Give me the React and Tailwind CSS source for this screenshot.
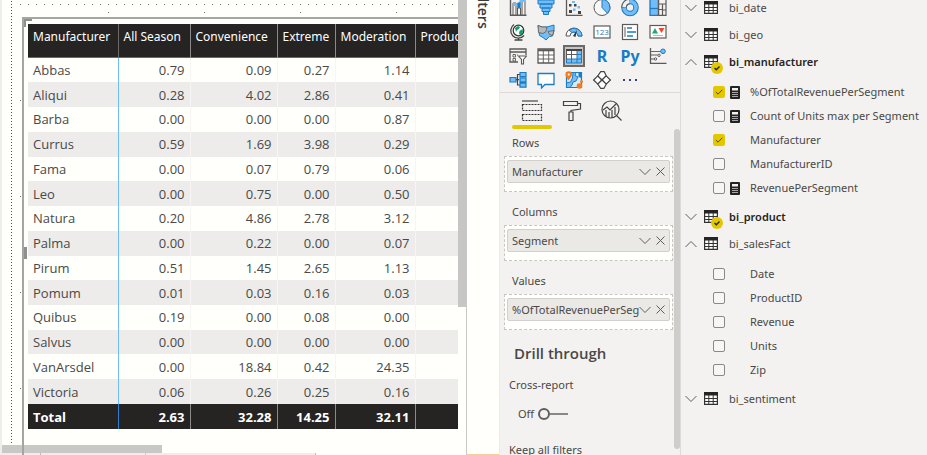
import React from "react";

const COLUMNS = ["All Season", "Convenience", "Extreme", "Moderation", "Productivity"];

const DATA = [
  ["Abbas", "0.79", "0.09", "0.27", "1.14"],
  ["Aliqui", "0.28", "4.02", "2.86", "0.41"],
  ["Barba", "0.00", "0.00", "0.00", "0.87"],
  ["Currus", "0.59", "1.69", "3.98", "0.29"],
  ["Fama", "0.00", "0.07", "0.79", "0.06"],
  ["Leo", "0.00", "0.75", "0.00", "0.50"],
  ["Natura", "0.20", "4.86", "2.78", "3.12"],
  ["Palma", "0.00", "0.22", "0.00", "0.07"],
  ["Pirum", "0.51", "1.45", "2.65", "1.13"],
  ["Pomum", "0.01", "0.03", "0.16", "0.03"],
  ["Quibus", "0.19", "0.00", "0.08", "0.00"],
  ["Salvus", "0.00", "0.00", "0.00", "0.00"],
  ["VanArsdel", "0.00", "18.84", "0.42", "24.35"],
  ["Victoria", "0.06", "0.26", "0.25", "0.16"],
];

const TOTAL = ["2.63", "32.28", "14.25", "32.11"];

const G = "#5c5a58";
const B = "#1a7cc4";
const L = "#74bcf5";

/* ---------- visual gallery icons, each on an 18 x 18 grid ---------- */

const VISUALS = [
  {
    name: "Ribbon chart",
    art: (
      <>
        <path d="M1.5 0V16.3H17.5" fill="none" stroke={G} strokeWidth="1.4" />
        <path d="M4 4h3v12H4zM8.5 9h3v7h-3zM13 2h3v14h-3z" fill="#f3f2f1" stroke={G} />
        <path d="M4 4h5c2 0 .5-4 3.500-4h4.500v3h-4c-1.500 0-.5 6-2.500 6H8V7H4z" fill={L} />
        <path d="M8.500 9V3.500h3V9z" fill={B} />
      </>
    ),
  },
  {
    name: "Funnel",
    art: (
      <g fill={L} stroke={B}>
        <path d="M1 1h16v4H1zM3 5h12v4H3zM5 9h8v3.500H5zM6.500 12.500h5v3h-5z" />
      </g>
    ),
  },
  {
    name: "Scatter chart",
    art: (
      <>
        <path d="M1.5 0V16.3H17.5" fill="none" stroke={G} strokeWidth="1.3" />
        <path d="M4 11h3v3H4zM9 5h2.500v2.500H9zM13 12h3v3h-3zM4 5h2.500v2.500H4z" fill="#444" />
        <path d="M8 9.500h2.500V12H8zM12.500 7h2.500v2.500h-2.500zM7 2h3v2H7z" fill={L} />
      </>
    ),
  },
  {
    name: "Pie chart",
    art: (
      <>
        <circle cx="9" cy="8.500" r="8" fill="#f8f8f6" stroke={G} />
        <path d="M9 .5a8 8 0 0 1 5.500 13.800L9 8.500z" fill={L} stroke={B} />
      </>
    ),
  },
  {
    name: "Donut chart",
    art: (
      <>
        <circle cx="9" cy="8.500" r="6" fill="none" stroke={B} strokeWidth="5.600" />
        <circle cx="9" cy="8.500" r="6" fill="none" stroke={L} strokeWidth="3.600" />
        <path d="M3 8.500a6 6 0 0 1 6-6" fill="none" stroke={G} strokeWidth="5.600" />
        <path d="M3 8a6 6 0 0 1 5.500-5.500" fill="none" stroke="#f3f2f1" strokeWidth="3.600" />
      </>
    ),
  },
  {
    name: "Treemap",
    art: (
      <>
        <path d="M1 0h8.500v16.300H1z" fill={L} stroke={B} strokeWidth="1.300" />
        <path d="M1 9.500h8.500" stroke={B} strokeWidth="1.300" />
        <path d="M9.500 0h7.500v16.300H9.500zM9.500 5h7.500M9.500 10.500h4V16M13.500 5v6H17" fill="none" stroke={G} strokeWidth="1.200" />
      </>
    ),
  },
  {
    name: "Map",
    art: (
      <>
        <circle cx="9.500" cy="7.500" r="5.300" fill="#fff" stroke="#333" strokeWidth="1.200" />
        <path d="M6 5l3-2 2 1-1 2-2 1-1 2zM10.500 8l3-2 .5 3-2 3-2-1z" fill="#0aa06e" />
        <path d="M5 1.500a7.500 7.500 0 1 0 10 11M9.500 14.500V17M5.500 17h8" fill="none" stroke="#444" strokeWidth="1.300" />
      </>
    ),
  },
  {
    name: "Filled map",
    art: (
      <>
        <path d="M1 2.500l4 1.500h5l7-2v6l-1.500 5-3 .5-3.500 3.500-3-2.500-3.500-2z" fill={L} stroke={B} />
        <path d="M1 2.500l4 1.500h5l-1 4.500-3 2-4.500-1zM11 8.500l6-1-1.500 5-3-1z" fill="#b9b8b6" stroke={G} strokeWidth=".800" />
      </>
    ),
  },
  {
    name: "Gauge",
    art: (
      <>
        <path d="M1 13a8 8 0 0 1 16 0h-4a4 4 0 0 0-8 0z" fill="#fff" stroke={G} />
        <path d="M4 7.200A8 8 0 0 1 17 13h-4A4 4 0 0 0 7 9.500z" fill={L} stroke={B} />
        <path d="M8 13l4-6-1.500 7z" fill="#333" />
      </>
    ),
  },
  {
    name: "Card",
    art: (
      <>
        <rect x="1" y="3" width="16" height="12" fill="#fff" stroke={G} strokeWidth="1.200" />
        <text x="9" y="12" textAnchor="middle" fontSize="8" fill={B} fontFamily="Open Sans, sans-serif">123</text>
      </>
    ),
  },
  {
    name: "Multi-row card",
    art: (
      <>
        <rect x="1.500" y="1.500" width="15" height="15" fill="#fff" stroke={G} strokeWidth="1.200" />
        <path d="M4 4v10" stroke={G} />
        <path d="M6 5h5M6 9h9M6 13h6" stroke={B} strokeWidth="1.600" />
      </>
    ),
  },
  {
    name: "KPI",
    art: (
      <>
        <rect x="1" y="2.500" width="16" height="12.500" fill="#fff" stroke={G} strokeWidth="1.200" />
        <path d="M3 10.500L6 5l3 5.500z" fill="#1aab77" />
        <path d="M9.500 5h6L12.500 10z" fill="#f0452f" />
        <path d="M4 12.500h10" stroke="#bbb" />
      </>
    ),
  },
  {
    name: "Slicer",
    art: (
      <>
        <path d="M9 15H1V2h16v6M1 5h16" fill="none" stroke={G} strokeWidth="1.300" />
        <path d="M4 7.500h2.500V10H4zM4 11.500h2.500V14H4zM9 8h-1" fill="none" stroke={G} strokeWidth=".900" />
        <path d="M9.500 9h8l-3 3.500v4.500h-2v-4.500z" fill="#fff" stroke={G} strokeWidth="1.100" />
      </>
    ),
  },
  {
    name: "Table",
    art: (
      <>
        <path d="M1 2h16v14H1z" fill="#fff" stroke={G} strokeWidth="1.300" />
        <path d="M1 3.300h16" stroke={G} strokeWidth="2" />
        <path d="M1 8h16M1 12h16M6.300 3v13M11.700 3v13" stroke={G} strokeWidth=".900" />
      </>
    ),
  },
  {
    name: "Matrix",
    selected: true,
    art: (
      <>
        <path d="M1.500 3h15v13h-15z" fill="#fff" />
        <path d="M12 3h4.500v13h-15v-4H12z" fill={L} stroke={B} />
        <path d="M12 7.500h4.500M6.500 12v4M12 12v4M12 12h4.500" stroke={B} />
        <path d="M1.500 12V3h10.500M1.500 7.500H12M6.500 3v9" fill="none" stroke={G} />
        <path d="M1 3h16" stroke="#444" strokeWidth="2" />
      </>
    ),
  },
  { name: "R script visual", text: "R" },
  { name: "Python visual", text: "Py" },
  {
    name: "Key influencers",
    art: (
      <>
        <path d="M1.500 1v15.300h16" fill="none" stroke={G} strokeWidth="1.300" />
        <path d="M1.500 4.500H12" stroke={B} />
        <path d="M1.500 8h7M1.500 12h4" stroke={G} />
        <circle cx="14" cy="4.300" r="2.300" fill={L} stroke={B} />
        <circle cx="10" cy="8.300" r="1.200" fill="none" stroke={G} />
        <circle cx="6.500" cy="12" r="1.200" fill="none" stroke={G} />
      </>
    ),
  },
  {
    name: "Decomposition tree",
    art: (
      <>
        <path d="M6 8.700h4M11 3.500H8.500v10.500H11" fill="none" stroke="#444" strokeWidth="1.200" />
        <path d="M1 6.500h6v4.500H1zM11 1.500h6v4h-6zM11 6.800h6v4h-6zM11 12.200h6v4h-6z" fill={L} stroke={B} strokeWidth="1.200" />
      </>
    ),
  },
  {
    name: "Q&A",
    art: <path d="M1 2.500h16v11H8L4.500 17v-3.500H1z" fill="#fff" stroke={B} strokeWidth="1.300" />,
  },
  {
    name: "ArcGIS Maps",
    art: (
      <>
        <path d="M1.500 1.500h15v15h-15z" fill="#d5eafa" stroke={B} strokeWidth="1.200" />
        <path d="M8 1.500h3l-1 3 3 1.500-2 4-3 1-1 3-2 2.500H1.500V12l4-1 2-4z" fill={L} stroke={B} />
        <path d="M13.500 2h3v5l-3-1z" fill={B} />
        <path d="M3.500 9.500C1 6 .5 5 .5 3.500a3 3 0 0 1 6.500 0c0 1.500-1 2.500-3.500 6z" fill="#f57b1c" />
        <circle cx="3.700" cy="3.500" r="1" fill="#fff" />
        <circle cx="14.500" cy="15" r="2.800" fill="#f57b1c" />
        <circle cx="16.500" cy="10.500" r="1.500" fill="#f57b1c" />
      </>
    ),
  },
  {
    name: "Power Apps",
    art: (
      <g fill="#fff" stroke="#444" strokeWidth="1.200" strokeLinejoin="round">
        <path d="M5.500.7h6L17.400 9l-5.900 8.300h-6L.6 9z" stroke="none" />
        <path d="M.6 9l4.200-4.200L9 9l-4.200 4.200z" />
        <path d="M4.800 4.800L7.700.7h3.600L13.200 4.800 9 9z" />
        <path d="M9 9l4.200-4.200L17.400 9l-4.200 4.200z" />
        <path d="M4.800 13.200L9 9l4.200 4.200-2.200 4.100H7.700z" />
      </g>
    ),
  },
];

function VisualButton({ visual }) {
  return (
    <button
      type="button"
      aria-label={visual.name}
      className={
        "flex h-6 w-7 items-center justify-center " +
        (visual.text ? "text-base font-bold leading-none text-[#1a7cc4]" : "")
      }
    >
      {visual.text ? (
        visual.text
      ) : (
        <span
          className={
            visual.selected
              ? "flex size-[22px] shrink-0 items-center justify-center border-2 border-[#6b6a68] bg-[#c8c6c4]"
              : "flex"
          }
        >
          <svg width="18" height="18" viewBox="0 0 18 18" className="shrink-0">
            {visual.art}
          </svg>
        </span>
      )}
    </button>
  );
}

function Chevron({ up }) {
  return (
    <svg width="12" height="8" viewBox="0 0 12 8" className="shrink-0">
      <path d={up ? "M.5 7L6 1.500 11.500 7" : "M.5 1L6 6.500 11.500 1"} fill="none" stroke="#605e5c" />
    </svg>
  );
}

function TableIcon({ badge }) {
  return (
    <span className="relative flex shrink-0">
      <svg width="14" height="13" viewBox="0 0 14 13">
        <path d="M.6.6h12.800v11.800H.6z" fill="#fff" stroke="#333" strokeWidth="1.200" />
        <path d="M0 0h14v3.500H0z" fill="#252423" />
        <path d="M0 6.500h14M0 9.500h14M4.800 3v10M9.200 3v10" stroke="#333" />
      </svg>
      {badge && (
        <svg width="12" height="12" viewBox="0 0 12 12" className="absolute left-[7px] top-[7px]">
          <circle cx="6" cy="6" r="6" fill="#e3c800" />
          <path d="M3.500 6l1.800 1.700L8.500 4.500" fill="none" stroke="#252423" strokeWidth="1.400" />
        </svg>
      )}
    </span>
  );
}

function TableNode({ name, open, used, fields }) {
  return (
    <li>
      <button type="button" aria-expanded={!!open} className="flex h-[27px] items-center pl-1">
        <Chevron up={open} />
        <span className="ml-[7px] flex">
          <TableIcon badge={used} />
        </span>
        <span className={used ? "ml-[11px] font-semibold text-[#252423]" : "ml-[11px]"}>{name}</span>
      </button>
      {fields && (
        <ul className="pb-[3px] pl-8 pt-[5px]">
          {fields.map((f) => (
            <FieldNode key={f.name} {...f} />
          ))}
        </ul>
      )}
    </li>
  );
}

function FieldNode({ name, checked, measure }) {
  return (
    <li>
      <label className="flex h-6 items-center whitespace-nowrap">
        <span className="relative flex size-3 shrink-0">
          <input
            type="checkbox"
            defaultChecked={checked}
            className="peer size-3 appearance-none rounded-xs border border-[#8a8886] bg-[#f7f6f4] checked:border-[#e3c800] checked:bg-[#e3c800]"
          />
          <svg
            viewBox="0 0 12 12"
            className="pointer-events-none absolute inset-0 hidden size-3 peer-checked:block"
          >
            <path d="M2.800 6l2.200 2.200 4.300-4.400" fill="none" stroke="#4f4800" />
          </svg>
        </span>
        <span className="ml-[5px] flex w-5 shrink-0">
          {measure && (
            <svg width="10" height="13" viewBox="0 0 10 13">
              <rect width="10" height="13" rx="1" fill="#252423" />
              <path d="M2 2h6v2.500H2z" fill="#f3f2f1" />
              <path d="M2 6.500h6M2 8.500h6M2 10.500h6" stroke="#a9a7a5" />
            </svg>
          )}
        </span>
        {name}
      </label>
    </li>
  );
}

function Well({ label, field }) {
  return (
    <section className="mb-[7px]">
      <h3 className="flex h-[26px] items-center pl-2">{label}</h3>
      <div className="h-9 border border-dashed border-[#c8c6c4] bg-[#fffffc] px-0.5 pt-[3px]">
        <div className="flex h-[23px] items-center rounded-xs border border-[#d2d0ce] bg-[#eae9e6] pl-1 pr-1">
          <span className="min-w-0 flex-1 overflow-hidden whitespace-nowrap">{field}</span>
          <button type="button" aria-label={"Options for " + field} className="flex">
            <Chevron />
          </button>
          <button type="button" aria-label={"Remove " + field} className="ml-[5px] flex">
            <svg width="9" height="9" viewBox="0 0 9 9">
              <path d="M.5.5l8 8M8.500.5l-8 8" stroke="#605e5c" />
            </svg>
          </button>
        </div>
      </div>
    </section>
  );
}

function Matrix() {
  return (
    <table className="h-[405px] w-[480px] table-fixed border-collapse text-[13px] leading-5 text-[#4a4947]">
      <colgroup>
        <col className="w-[90px]" />
        <col className="w-[72px]" />
        <col className="w-[87px]" />
        <col className="w-[58px]" />
        <col className="w-[80px]" />
        <col />
      </colgroup>
      <thead>
        <tr className="h-[33px] border-b border-[#1f7ad0] bg-[#252423] font-['Noto_Sans','Open_Sans',sans-serif] text-xs leading-5 text-white">
          <th scope="col" className="border-r border-[#6a6a68] px-[5px] pb-1.5 text-left font-normal">
            Manufacturer
          </th>
          {COLUMNS.map((c) => (
            <th key={c} scope="col" className="whitespace-nowrap border-r border-[#8a8a88] px-[5px] pb-1.5 text-left font-normal">
              {c}
            </th>
          ))}
        </tr>
      </thead>
      <tbody>
        {DATA.map(([name, ...values]) => (
          <tr key={name} className="even:bg-[#edecea]">
            <th scope="row" className="border-r border-[#6fbcfb] px-[5px] text-left font-normal">
              {name}
            </th>
            {values.map((v, i) => (
              <td key={i} className="border-r border-[#f6f5f3] px-[5px] text-right">
                {v}
              </td>
            ))}
            <td />
          </tr>
        ))}
      </tbody>
      <tfoot>
        <tr className="h-[25px] bg-[#252423] font-bold text-white">
          <th scope="row" className="border-r border-[#2f80cc] px-[5px] text-left">
            Total
          </th>
          {TOTAL.map((v) => (
            <td key={v} className="border-r border-[#8a8a88] px-[5px] text-right">
              {v}
            </td>
          ))}
          <td />
        </tr>
      </tfoot>
    </table>
  );
}

function ReportCanvas() {
  return (
    <main className="flex min-w-0 flex-1 flex-col border-r border-[#c8c8c6] bg-[#fffffc]">
      <div className="flex min-h-0 flex-1">
        <div className="w-0.5 bg-[#efeeec]" />
        <div className="relative flex min-w-0 flex-1 flex-col overflow-hidden">
          <svg className="absolute inset-0 h-full w-full" aria-hidden="true">
            <path d="M9.500 1V445" stroke="#555" strokeDasharray="1 2" />
            <path d="M18 4.500H2000" stroke="#777" strokeDasharray="1 7" />
            <path d="M106 12.500H2000" stroke="#777" strokeDasharray="1 95" />
            <path d="M18.500 100V445" stroke="#777" strokeDasharray="1 95" />
          </svg>
          <div className="relative ml-5 mt-[17px] flex-1 overflow-hidden border-l-2 border-t-2 border-[#a5a5a3] pl-1 pt-[5px]">
            <span className="absolute left-0 top-0 size-2 border-l-2 border-t-2 border-[#8f8f8d]" />
            <span className="absolute left-0 top-[228px] h-3 w-[3px] bg-[#8f8f8d]" />
            <Matrix />
          </div>
        </div>
        <div className="w-2 shrink-0">
          <div className="h-[307px] bg-[#c6c6c4]" />
        </div>
      </div>
      <div className="-mt-[10px] ml-0.5 h-2 w-40 shrink-0 bg-[#c8c8c6]" />
      <div className="flex h-0.5 shrink-0 bg-[#fffffc]">
        <div className="w-[41px] border-r border-[#bbb] bg-[#efeeec]" />
        <div className="w-[105px] border-r border-[#ccc] bg-[#efeeec]" />
        <div className="w-[170px] border-r border-[#bbb] bg-[#efeeec]" />
      </div>
    </main>
  );
}

function FiltersRail() {
  return (
    <aside className="flex w-8 shrink-0 flex-col justify-between bg-[#fffffc]">
      <div className="flex h-[29px] items-end justify-center overflow-hidden">
        <h2 className="text-sm font-semibold leading-5 text-[#3b3a39] [writing-mode:vertical-rl]">Filters</h2>
      </div>
      <div className="h-px bg-[#e8dc7a]" />
    </aside>
  );
}

function VisualizationsPane() {
  return (
    <aside className="flex w-[181px] shrink-0 flex-col overflow-hidden border-l border-[#eceae8] bg-[#f3f2f0]">
      <div className="-mt-1 grid shrink-0 grid-cols-[repeat(6,28px)] pl-1">
        {VISUALS.map((v) => (
          <VisualButton key={v.name} visual={v} />
        ))}
        <button type="button" aria-label="More visuals" className="flex h-6 w-7 items-center justify-center gap-1">
          <span className="size-0.5 bg-[#3a3f78]" />
          <span className="size-0.5 bg-[#3a3f78]" />
          <span className="size-0.5 bg-[#3a3f78]" />
        </button>
      </div>
      <div role="tablist" className="flex h-[37px] shrink-0 border-t border-[#dddbd9] pl-3">
        <button type="button" role="tab" aria-selected="true" aria-label="Fields" className="flex w-10 flex-col items-center">
          <span className="flex h-8 pt-[7px]">
            <svg width="22" height="22" viewBox="0 0 22 22">
              <path d="M1 1h16" stroke="#444" strokeWidth="1.200" />
              <path d="M1.500 4.500h19v6h-19zM1.500 14.500h19v6h-19z" fill="none" stroke="#333" strokeWidth="1.200" strokeDasharray="2 1" />
            </svg>
          </span>
          <span className="h-1 w-full rounded-full bg-[#e3c800]" />
        </button>
        <button type="button" role="tab" aria-selected="false" aria-label="Format" className="flex w-10 justify-center pt-[7px]">
          <svg width="20" height="22" viewBox="0 0 20 22" fill="none" stroke="#444" strokeWidth="1.200">
            <path d="M1.500 1.500h14v4h-14zM15.500 3.500h3v5.500l-9.500 1.500V12M7 12h4v8.500H7z" />
          </svg>
        </button>
        <button type="button" role="tab" aria-selected="false" aria-label="Analytics" className="flex w-10 justify-center pt-[7px]">
          <svg width="22" height="22" viewBox="0 0 22 22" fill="none" stroke="#444" strokeWidth="1.200">
            <circle cx="9.500" cy="9.500" r="8.500" />
            <path d="M15.500 15.500l5 5M2 10l4-3 3 3 6-6M5 10v6M8 12v6M11 10v8M14 7v8" />
          </svg>
        </button>
      </div>
      <div className="flex min-h-0 flex-1">
        <div className="min-w-0 flex-1 pl-1 pr-px pt-px">
          <Well label="Rows" field="Manufacturer" />
          <Well label="Columns" field="Segment" />
          <Well label="Values" field="%OfTotalRevenuePerSegment" />
          <h2 className="ml-[10px] mt-[11px] font-['Open_Sans',sans-serif] text-[15px] font-semibold leading-6">Drill through</h2>
          <p className="ml-[5px] mt-3 leading-4">Cross-report</p>
          <label className="ml-3.5 mt-[13px] flex h-4 w-fit items-center gap-1">
            Off
            <input type="checkbox" role="switch" className="peer size-3 appearance-none rounded-full border-2 border-[#605e5c] bg-[#f3f2f0]" />
            <span className="-ml-1 h-0.5 w-[18px] bg-[#8a8886]" />
          </label>
          <p className="ml-[5px] mt-5 leading-4">Keep all filters</p>
        </div>
        <div className="h-80 w-1.5 shrink-0 rounded-full bg-[#cfcdca]" />
      </div>
    </aside>
  );
}

function FieldsPane() {
  return (
    <aside className="w-[247px] shrink-0 overflow-hidden border-l border-[#dddbd9] bg-[#f3f2f0]">
      <ul className="-mt-1.5">
        <TableNode name="bi_date" />
        <TableNode name="bi_geo" />
        <TableNode
          name="bi_manufacturer"
          open
          used
          fields={[
            { name: "%OfTotalRevenuePerSegment", checked: true, measure: true },
            { name: "Count of Units max per Segment", measure: true },
            { name: "Manufacturer", checked: true },
            { name: "ManufacturerID" },
            { name: "RevenuePerSegment", measure: true },
          ]}
        />
        <TableNode name="bi_product" used />
        <TableNode
          name="bi_salesFact"
          open
          fields={[
            { name: "Date" },
            { name: "ProductID" },
            { name: "Revenue" },
            { name: "Units" },
            { name: "Zip" },
          ]}
        />
        <TableNode name="bi_sentiment" />
      </ul>
    </aside>
  );
}

export default function App() {
  return (
    <div className="flex h-screen w-full overflow-hidden font-['Open_Sans','Noto_Sans',sans-serif] text-[11px] leading-4 text-[#4a4846]">
      <ReportCanvas />
      <FiltersRail />
      <div className="flex shrink-0 font-['Noto_Sans','Open_Sans',sans-serif]">
        <VisualizationsPane />
        <FieldsPane />
      </div>
    </div>
  );
}
